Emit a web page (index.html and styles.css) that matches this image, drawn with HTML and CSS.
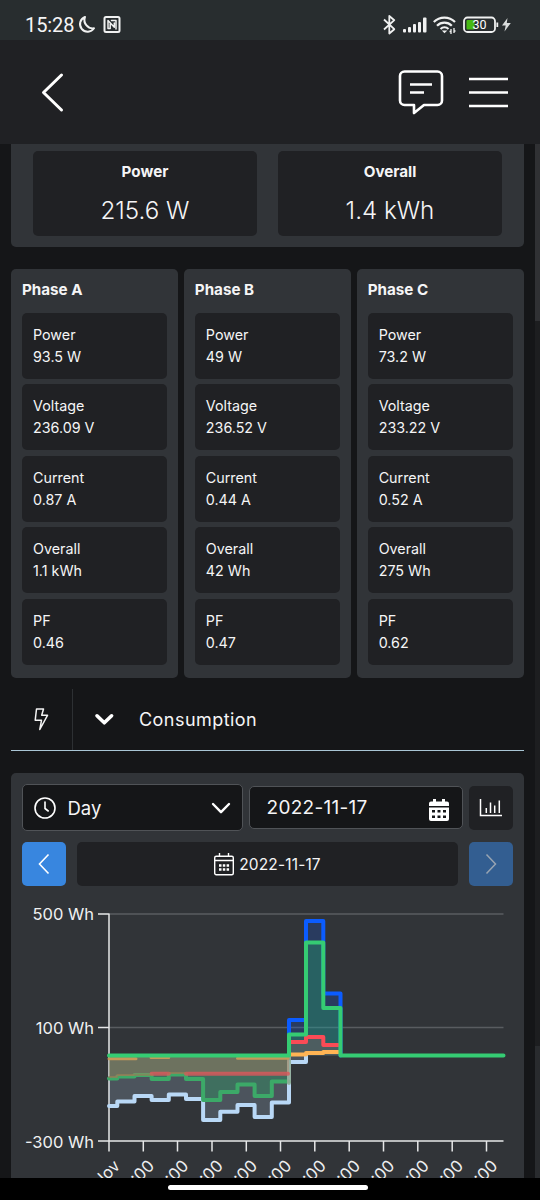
FILE: index.html
```
<!DOCTYPE html>
<html lang="en">
<head>
<meta charset="utf-8">
<title>Energy meter</title>
<link rel="stylesheet" href="styles.css">
</head>
<body>
<div class="screen">
  <div class="status">
    <span class="time">15:28</span>
    <svg class="status-left" width="45" height="40" viewBox="77 0 45 40" fill="none" stroke="#f0f1f1" stroke-width="2" stroke-linejoin="round" stroke-linecap="round">
      <path d="M85 17a7.6 7.6 0 1 0 9 11.3A8.4 8.4 0 0 1 85 17z"/>
      <rect x="104.500" y="17" width="15" height="15" rx="1.500"/>
      <path d="M110 28.500h-2V20.500l6.300 6.800v-4.300M111.500 20.500h4.500v8.500M110.200 28.500v-4.500" stroke-width="1.500"/>
    </svg>
    <svg class="status-right" width="135" height="40" viewBox="380 0 135 40" fill="none" stroke="#f0f1f1" stroke-width="2">
      <path d="M384 19.500l10.300 9.700-5 4.300V16l5 4.200L384 29.500" stroke-width="1.800" stroke-linejoin="round"/>
      <g fill="#f0f1f1" stroke="none"><rect x="403" y="29" width="3" height="3.500" rx="1"/><rect x="408" y="27" width="3" height="5.500" rx="1"/><rect x="413" y="24" width="3" height="8.500" rx="1"/><rect x="418" y="22" width="3" height="10.500" rx="1"/><rect x="423" y="17.500" width="3.500" height="15" rx="1"/></g>
      <path d="M433.800 22a15 15 0 0 1 21.200 0M437 25.700a10.500 10.500 0 0 1 14.800 0M440.500 29a6 6 0 0 1 8 0" stroke-width="2.200"/>
      <path d="M441.800 30.500h5.500l-2.800 2.800z" fill="#f0f1f1" stroke="none"/>
      <path d="M451 29v5M454 28v5M449.500 31.500h1.500M454 31h1.500" stroke-width="1.300"/>
      <rect x="464" y="17.500" width="31" height="14.500" rx="3.500" stroke-width="1.800"/>
      <rect x="466.500" y="20" width="8" height="9.500" rx="1" fill="#46b913" stroke="none"/>
      <path d="M497.300 22.500v4.500" stroke-width="1.800"/>
      <text class="battery" x="479.500" y="28.700">30</text>
      <path d="M507.500 18l-5.500 7.500h3.700L504.500 31.500l6.300-8.500h-4z" fill="#d9dcdc" stroke="none"/>
    </svg>
  </div>
  <header class="header">
    <svg class="back" width="40" height="60" viewBox="32 62 40 60" fill="none" stroke="#fff" stroke-width="3" stroke-linecap="round" stroke-linejoin="round"><path d="M61.500 75L43.500 92.500l18 17.500"/></svg>
    <svg width="120" height="60" viewBox="392 62 120 60" fill="none" stroke="#fff" stroke-width="2.600">
      <path d="M404.500 71.500h33a4.500 4.500 0 0 1 4.500 4.500v24.500a4.500 4.500 0 0 1-4.500 4.500H424l-10 8v-8h-9.500a4.500 4.500 0 0 1-4.500-4.500V76a4.500 4.500 0 0 1 4.500-4.500z" stroke-linejoin="round"/>
      <path d="M410 84.500h22M410 92.500h14M469 79h39M469 92.500h39M469 106h39"/>
    </svg>
  </header>
  <main class="content">
    <section class="totals">
      <div class="total"><b>Power</b><span>215.6 W</span></div>
      <div class="total"><b>Overall</b><span>1.4 kWh</span></div>
    </section>
    <section class="phases">
      <div class="phase"><h2>Phase A</h2>
        <div class="cell">Power<br>93.5 W</div><div class="cell">Voltage<br>236.09 V</div><div class="cell">Current<br>0.87 A</div><div class="cell">Overall<br>1.1 kWh</div><div class="cell">PF<br>0.46</div>
      </div>
      <div class="phase"><h2>Phase B</h2>
        <div class="cell">Power<br>49 W</div><div class="cell">Voltage<br>236.52 V</div><div class="cell">Current<br>0.44 A</div><div class="cell">Overall<br>42 Wh</div><div class="cell">PF<br>0.47</div>
      </div>
      <div class="phase"><h2>Phase C</h2>
        <div class="cell">Power<br>73.2 W</div><div class="cell">Voltage<br>233.22 V</div><div class="cell">Current<br>0.52 A</div><div class="cell">Overall<br>275 Wh</div><div class="cell">PF<br>0.62</div>
      </div>
    </section>
    <section class="section-bar">
      <div class="bolt"><svg width="20" height="28" viewBox="31 705 20 28" fill="none" stroke="#f4f4f4" stroke-width="1.500" stroke-linejoin="round"><path d="M36.500 709h7l-1.800 6.300h5.800L39.800 729.500l1.700-9.200h-6.300z"/></svg></div>
      <svg class="chev" width="24" height="20" viewBox="92 710 24 20" fill="none" stroke="#fff" stroke-width="3.600" stroke-linecap="round" stroke-linejoin="round"><path d="M97 715.800l7.300 7 7.300-7"/></svg>
      <span>Consumption</span>
    </section>
    <section class="panel">
      <div class="filters">
        <div class="select">
          <svg width="24" height="24" viewBox="0 0 24 24" fill="none" stroke="#fff" stroke-width="1.600" stroke-linecap="round"><circle cx="12" cy="12" r="10"/><path d="M12 6v6.500l3.200 2.500"/></svg>
          <span>Day</span>
          <svg class="arrow" width="22" height="16" viewBox="0 0 22 16" fill="none" stroke="#fff" stroke-width="2.400" stroke-linecap="round" stroke-linejoin="round"><path d="M3 4l8 8.200L19 4"/></svg>
        </div>
        <div class="date"><span>2022-11-17</span>
          <svg width="20" height="22" viewBox="0 0 20 22"><path d="M2 2.500h2V0h3v2.500h6V0h3v2.500h2a2 2 0 0 1 2 2V7H0V4.500a2 2 0 0 1 2-2zM0 8.500h20V20a2 2 0 0 1-2 2H2a2 2 0 0 1-2-2z" fill="#fff"/><path d="M3 11h3v2.500H3zM8.500 11h3v2.500h-3zM14 11h3v2.500h-3zM3 16.500h3V19H3zM8.500 16.500h3V19h-3zM14 16.500h3V19h-3z" fill="#151618"/></svg>
        </div>
        <div class="square"><svg width="24" height="20" viewBox="0 0 24 20" fill="none" stroke="#fff" stroke-width="1.500"><path d="M1.500 1v16.500H23" /><path d="M7.300 15V10M11.500 15V4.500M15.700 15V7.500M20.300 15V2.500"/></svg></div>
      </div>
      <div class="pager">
        <div class="square prev"><svg width="20" height="24" viewBox="0 0 20 24" fill="none" stroke="#fff" stroke-width="1.600"><path d="M14.500 2.500L5.500 12l9 9.500"/></svg></div>
        <div class="current"><svg width="20" height="23" viewBox="0 0 20 23" fill="none" stroke="#fff" stroke-width="1.400"><rect x=".7" y="3.200" width="18.600" height="18.500" rx="1.500"/><path d="M1 7.500h18M5.500 0v3M14.500 0v3"/><path d="M5 12.500h2.500M8.800 12.500h2.500M12.600 12.500h2.500M5 16.500h2.500M8.800 16.500h2.500M12.600 16.500h2.500" stroke-width="2.500"/></svg><span>2022-11-17</span></div>
        <div class="square next"><svg width="20" height="24" viewBox="0 0 20 24" fill="none" stroke="#98a4b2" stroke-width="1.500"><path d="M5.500 2.500l9 9.500-9 9.500"/></svg></div>
      </div>
      <svg class="chart" width="513" height="281" viewBox="11 897 513 281">
        <path d="M109 914H503.500M109 1027.500H503.500" stroke="#595c60" stroke-width="1.500"/>
        <path d="M98 914H109M98 1027.500H109M98 1141H503.500M109 913.500V1151.500M143.300 1141v10.500M177.500 1141v10.500M212 1141v10.500M246.300 1141v10.500M280.500 1141v10.500M314.800 1141v10.500M349.200 1141v10.500M383.500 1141v10.500M417.800 1141v10.500M452.200 1141v10.500M486.500 1141v10.500" fill="none" stroke="#e6e7e8" stroke-width="1.500"/>
        <g class="axis-y"><text x="94" y="920">500 Wh</text><text x="94" y="1033.500">100 Wh</text><text x="94" y="1147.500">-300 Wh</text></g>
        <g class="axis-x">
          <text transform="translate(121 1167) rotate(-45)">17 Nov</text>
          <text transform="translate(155.300 1167) rotate(-45)">02:00</text>
          <text transform="translate(189.600 1167) rotate(-45)">04:00</text>
          <text transform="translate(224 1167) rotate(-45)">06:00</text>
          <text transform="translate(258.300 1167) rotate(-45)">08:00</text>
          <text transform="translate(292.600 1167) rotate(-45)">10:00</text>
          <text transform="translate(327 1167) rotate(-45)">12:00</text>
          <text transform="translate(361.300 1167) rotate(-45)">14:00</text>
          <text transform="translate(395.600 1167) rotate(-45)">16:00</text>
          <text transform="translate(430 1167) rotate(-45)">18:00</text>
          <text transform="translate(464.300 1167) rotate(-45)">20:00</text>
          <text transform="translate(498.600 1167) rotate(-45)">22:00</text>
        </g>
        <g class="series">
          <path fill="#0b5cff" fill-opacity=".2" stroke="none" d="M289 1055.500V1020H306V921H323.300V993.500H340.500V1055.500z"/>
          <path stroke="#0b5cff" d="M289 1055.500V1020H306V921H323.300V993.500H340.500V1055.500"/>
          <path fill="#b9d8f6" fill-opacity=".2" stroke="none" d="M109 1055.500V1106H117.300V1101.500H134.500V1096H151.600V1100H168.800V1094.500H186V1099H203.100V1120H220.300V1111.700H237.500V1105H254.600V1117H271.800V1102.500H289V1062H306V1055.500z"/>
          <path stroke="#b9d8f6" d="M109 1106H117.300V1101.500H134.500V1096H151.600V1100H168.800V1094.500H186V1099H203.100V1120H220.300V1111.700H237.500V1105H254.600V1117H271.800V1102.500H289V1062H306V1055.500"/>
          <path fill="#27a464" fill-opacity=".35" stroke="none" d="M109 1055.500V1078.500H117.300V1076.500H134.500V1075H151.600V1079H168.800V1074.500H186V1079H203.100V1100H220.300V1092H237.500V1084.500H254.600V1096H271.800V1081.500H289V1055.500z"/>
          <path stroke="#3ca968" d="M109 1078.500H117.300V1076.500H134.500V1075H151.600V1079H168.800V1074.500H186V1079H203.100V1100H220.300V1092H237.500V1084.500H254.600V1096H271.800V1081.500H289"/>
          <path stroke="#91ad99" stroke-opacity=".9" d="M289 1083V1057"/>
          <path fill="#c67862" fill-opacity=".34" stroke="none" d="M109 1055.500V1077.500H117.300V1076H134.500V1074.500H151.600V1073.700H289V1055.500z"/>
          <path stroke="#dc585b" stroke-opacity=".8" d="M151.600 1073.700H168.800M186 1073.700H288"/>
          <path stroke="#b0714f" stroke-opacity=".45" stroke-width="2" d="M109 1077H117.300V1075H151.600M168.800 1073H186"/>
          <path stroke="#c6995a" d="M109 1058.800H136M151 1057.500H168.800M237.500 1058.300H288" stroke-width="3"/>
          <path fill="#2ac96d" fill-opacity=".27" stroke="none" d="M289 1055.500V1034.500H306V942.500H323.300V1008H340.500V1055.500z"/>
          <path fill="#fa4b56" fill-opacity=".18" stroke="none" d="M289 1055.500V1042H306V1037H323.300V1045H340.500V1055.500z"/>
          <path stroke="#fa4b56" d="M291 1042H306V1037H323.300V1045H338.500"/>
          <path stroke="#ffb454" d="M291 1054.500H306V1053H323.300V1052H338.500"/>
          <path stroke="#35cc73" stroke-width="4" d="M109 1055.500H289V1034.500H306V942.500H323.300V1008H340.500V1055.500H503.500"/>
        </g>
      </svg>
    </section>
  </main>
  <aside class="scroll"><i></i><b></b></aside>
  <footer class="nav"><div class="home"></div></footer>
</div>
</body>
</html>
```
FILE: styles.css
```
* { box-sizing: border-box; }
body { margin: 0; background: #151618; color: #f5f5f6; font-family: Inter, "Noto Sans", sans-serif; }
.screen { position: relative; width: 540px; height: 1200px; overflow: hidden; display: flex; flex-direction: column; }
.status { height: 40px; flex: none; background: #282d2f; display: flex; }
.time { width: 77px; padding: 12px 0 0 25px; font: 20px/26px Roboto, sans-serif; letter-spacing: -.1px; white-space: nowrap; }
.status-right { margin-left: 258px; }
.battery { font: 12.500px Roboto, sans-serif; fill: #fff; stroke: none; text-anchor: middle; }
.header { height: 104px; flex: none; background: #202124; display: flex; justify-content: space-between; padding: 22px 28px 0 32px; }
.content { height: 1034px; flex: none; padding: 0 16px 0 11px; overflow: hidden; }
.totals { height: 103px; padding: 7px 22px 11px; background: #313438; border-radius: 0 0 5px 5px; display: grid; grid-template-columns: 1fr 1fr; gap: 21px; }
.total { background: #202124; border-radius: 5px; display: flex; flex-direction: column; align-items: center; padding-top: 9px; }
.total b { font-size: 15.200px; line-height: 23px; }
.total span { font-size: 24.200px; font-weight: 300; line-height: 36px; margin-top: 10px; }
.phases { margin-top: 22px; display: grid; grid-template-columns: repeat(3, 1fr); gap: 5.500px; }
.phase { height: 409px; padding: 10px 11px 9px; background: #313438; border-radius: 5px; }
h2 { margin: 0 0 11.500px; font-size: 15.200px; line-height: 22px; }
.cell { height: 66px; margin-bottom: 5.500px; padding: 11px; background: #202124; border-radius: 5px; font-size: 14.300px; line-height: 22px; }
.section-bar { margin-top: 11px; height: 62px; border-bottom: 1.500px solid #a9c5d4; display: flex; align-items: center; font-size: 18px; letter-spacing: .45px; }
.bolt { width: 62px; height: 61px; border-right: 1px solid #2d3033; padding: 16px 0 0 20px; }
.chev { margin: 0 23px 0 19px; }
.panel { margin-top: 22px; height: 405px; background: #313438; border-radius: 5px 5px 0 0; padding-top: 11px; }
.filters { height: 47px; padding: 0 11px; display: flex; align-items: center; gap: 6px; font-size: 18.500px; }
.select { width: 221px; height: 47px; background: #151618; border: 1px solid #505357; border-radius: 5px; display: flex; align-items: center; padding: 0 10px; gap: 10.500px; }
.arrow { margin-left: auto; }
.date { width: 214px; height: 43px; border: 1px solid #505357; border-radius: 5px; background: #151618; display: flex; align-items: center; justify-content: space-between; padding: 0 13px 0 16.500px; }
.date span { font-size: 19px; letter-spacing: .3px; }
.date svg { margin-top: 4px; }
.square { width: 44px; height: 44px; border-radius: 5px; background: #202124; display: flex; flex: none; align-items: center; justify-content: center; }
.pager { margin-top: 11px; padding: 0 11px; display: flex; gap: 11px; }
.prev { background: #3886df; }
.next { background: #335e91; }
.current { flex: 1; border-radius: 5px; background: #202124; display: flex; align-items: center; justify-content: center; gap: 5px; font-size: 15.500px; letter-spacing: .15px; }
.chart { display: block; margin-top: 11px; overflow: hidden; }
.axis-y, .axis-x { fill: #eff0f1; font-size: 16.500px; text-anchor: end; }
.series { fill: none; stroke-width: 4; stroke-linejoin: round; stroke-linecap: round; }
.scroll { position: absolute; left: 535px; top: 144px; width: 5px; height: 1034px; background: #1d1e20; display: flex; flex-direction: column; justify-content: space-between; }
.scroll i { height: 177px; background: #303134; }
.scroll b { height: 132px; background: #292b2e; }
.nav { height: 22px; flex: none; background: #000; display: flex; justify-content: center; padding-top: 7px; }
.home { width: 200px; height: 5px; margin-right: 4px; border-radius: 3px; background: #fff; }
```
